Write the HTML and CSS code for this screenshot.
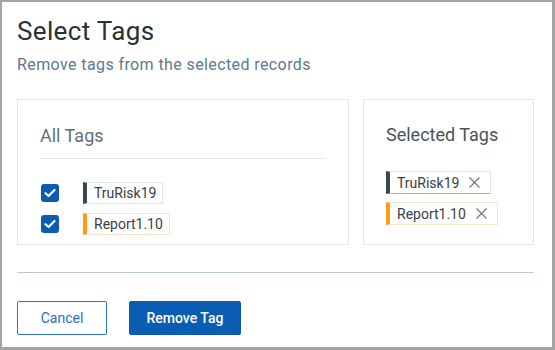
FILE: index.html
```html
<!DOCTYPE html>
<html>
<head>
<meta charset="utf-8">
<link rel="stylesheet" href="styles.css">
</head>
<body>
<div class="dialog">
  <h1 class="title">Select Tags</h1>
  <p class="subtitle">Remove tags from the selected records</p>
  <div class="panels">
    <section class="panel panel-all">
      <h2 class="panel-heading heading-all">All Tags</h2>
      <ul class="tag-list">
        <li class="tag-row">
          <span class="checkbox"><svg width="12" height="10" viewBox="0 0 12 10"><path d="M1.5 5.2 L4.6 8 L10.5 2" fill="none" stroke="#fff" stroke-width="2.2" stroke-linecap="round" stroke-linejoin="round"/></svg></span>
          <span class="tag tag-dark">TruRisk19</span>
        </li>
        <li class="tag-row">
          <span class="checkbox"><svg width="12" height="10" viewBox="0 0 12 10"><path d="M1.5 5.2 L4.6 8 L10.5 2" fill="none" stroke="#fff" stroke-width="2.2" stroke-linecap="round" stroke-linejoin="round"/></svg></span>
          <span class="tag tag-orange">Report1.10</span>
        </li>
      </ul>
    </section>
    <section class="panel panel-selected">
      <h2 class="panel-heading heading-selected">Selected Tags</h2>
      <ul class="selected-list">
        <li><span class="tag tag-dark tag-sel tag-sel-dark">TruRisk19<svg class="x" width="11" height="11" viewBox="0 0 11 11"><path d="M0.5 0.5 L10.5 10.5 M10.5 0.5 L0.5 10.5" stroke="#6b7780" stroke-width="1.1"/></svg></span></li>
        <li><span class="tag tag-orange tag-sel">Report1.10<svg class="x" width="11" height="11" viewBox="0 0 11 11"><path d="M0.5 0.5 L10.5 10.5 M10.5 0.5 L0.5 10.5" stroke="#6b7780" stroke-width="1.1"/></svg></span></li>
      </ul>
    </section>
  </div>
  <div class="footer">
    <button class="btn btn-cancel">Cancel</button>
    <button class="btn btn-primary">Remove Tag</button>
  </div>
</div>
</body>
</html>
```
FILE: styles.css
```css
html, body {
  margin: 0;
  padding: 0;
  background: #fff;
}
.dialog {
  box-sizing: border-box;
  width: 555px;
  height: 350px;
  border-style: solid;
  border-color: #a3a3a3;
  border-width: 2px 3px 3px 2px;
  padding: 0 18px 0 15px;
  font-family: Roboto, "Liberation Sans", sans-serif;
  background: #fff;
}
.title {
  margin: 14px 0 0;
  font-size: 26px;
  line-height: 30px;
  font-weight: 400;
  letter-spacing: 0.35px;
  color: #263238;
}
.subtitle {
  margin: 9px 0 0;
  font-size: 16px;
  line-height: 20px;
  letter-spacing: 0.4px;
  color: #5e7990;
}
.panels {
  display: flex;
  gap: 14px;
  margin-top: 24px;
}
.panel {
  box-sizing: border-box;
  height: 146px;
  border: 1px solid #e3e7ea;
}
.panel-all {
  width: 332px;
  padding: 25px 22px 0 22px;
}
.panel-selected {
  width: 171px;
  padding: 24px 22px 0 22px;
}
.panel-heading {
  margin: 0;
  font-weight: 400;
  font-size: 18px;
  line-height: 22px;
}
.heading-all {
  color: #5f6f7c;
  padding-bottom: 11px;
  border-bottom: 1px solid #e1e7eb;
}
.heading-selected {
  color: #47535c;
}
.tag-list, .selected-list {
  list-style: none;
  margin: 0;
  padding: 0;
}
.tag-list {
  margin-top: 23px;
  display: flex;
  flex-direction: column;
  gap: 9px;
}
.tag-row {
  display: flex;
  align-items: center;
  gap: 24px;
  padding-left: 1px;
}
.checkbox {
  width: 18px;
  height: 18px;
  border-radius: 3px;
  background: #0b5cb3;
  display: flex;
  align-items: center;
  justify-content: center;
}
.tag {
  box-sizing: border-box;
  display: inline-flex;
  align-items: center;
  height: 22px;
  padding: 0 6px 0 7px;
  font-size: 14px;
  color: #37414a;
  border: 1px solid #dde3e7;
  border-left-width: 4px;
}
.tag-dark {
  border-left-color: #37474f;
}
.tag-orange {
  border-color: #fbe5c8;
  border-left-color: #ff9b14;
}
.selected-list {
  margin-top: 25px;
  display: flex;
  flex-direction: column;
  gap: 8px;
}
.tag-sel {
  height: 23px;
  padding-right: 10px;
}
.tag-sel-dark {
  border-bottom-color: #a9b6bf;
}
.x {
  margin-left: 10px;
}
.footer {
  margin-top: 27px;
  border-top: 1px solid #b9c9d4;
  padding-top: 28px;
  display: flex;
  gap: 22px;
}
.btn {
  box-sizing: border-box;
  height: 34px;
  border-radius: 2px;
  font-family: Roboto, "Liberation Sans", sans-serif;
  font-size: 14px;
  padding: 0;
  cursor: pointer;
}
.btn-cancel {
  width: 90px;
  background: #fff;
  border: 1px solid #2f74c3;
  color: #2c6fbf;
}
.btn-primary {
  width: 112px;
  background: #0b5db3;
  border: 1px solid #0b5db3;
  color: #fff;
  font-weight: 500;
}
```
